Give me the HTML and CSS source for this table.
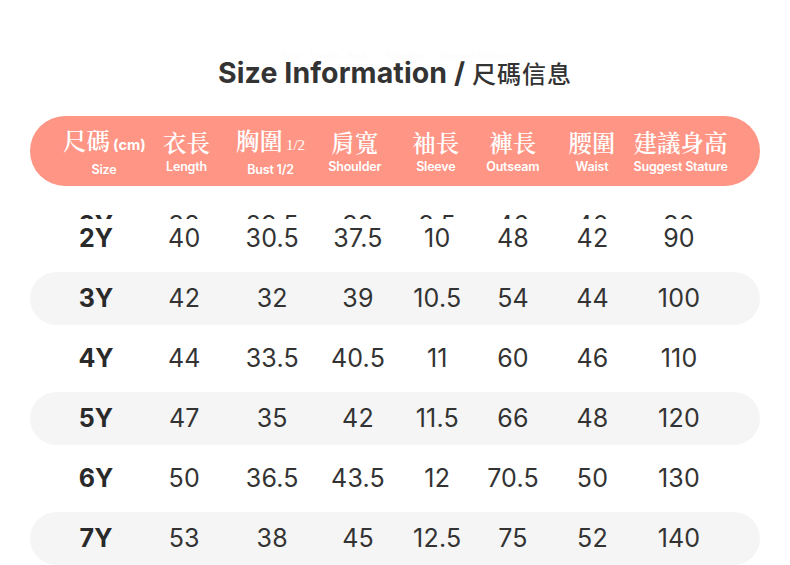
FILE: index.html
```html
<!DOCTYPE html>
<html lang="zh-Hant">
<head>
<meta charset="utf-8">
<title>Size Information</title>
<link rel="stylesheet" href="styles.css">
</head>
<body>
<div class="page">
  <div class="ghost">Size&nbsp;&nbsp;&nbsp;&nbsp;Length&nbsp;&nbsp;&nbsp;Bust&nbsp;&nbsp;&nbsp;&nbsp;&nbsp;&nbsp;&nbsp;&nbsp;Shoulder&nbsp;&nbsp;&nbsp;&nbsp;&nbsp;&nbsp;Suggest Stature</div>
  <h1 class="title">Size Information / <span class="cjk">尺碼信息</span></h1>

  <div class="head">
    <div class="hcell"><div class="zh">尺碼<span class="unit">(cm)</span></div><div class="en">Size</div></div>
    <div class="hcell"><div class="zh">衣長</div><div class="en">Length</div></div>
    <div class="hcell"><div class="zh">胸圍<span class="half">1/2</span></div><div class="en">Bust 1/2</div></div>
    <div class="hcell"><div class="zh">肩寬</div><div class="en">Shoulder</div></div>
    <div class="hcell"><div class="zh">袖長</div><div class="en">Sleeve</div></div>
    <div class="hcell"><div class="zh">褲長</div><div class="en">Outseam</div></div>
    <div class="hcell"><div class="zh">腰圍</div><div class="en">Waist</div></div>
    <div class="hcell"><div class="zh">建議身高</div><div class="en">Suggest Stature</div></div>
  </div>

  <div class="rows">
    <div class="row first">
      <div class="strip">
        <div class="cells"><span class="sz">2Y</span><span>38</span><span>29.5</span><span>33</span><span>9.5</span><span>46</span><span>40</span><span>90</span></div>
      </div>
      <span class="sz">2Y</span><span>40</span><span>30.5</span><span>37.5</span><span>10</span><span>48</span><span>42</span><span>90</span>
    </div>
    <div class="row alt"><span class="sz">3Y</span><span>42</span><span>32</span><span>39</span><span>10.5</span><span>54</span><span>44</span><span>100</span></div>
    <div class="row"><span class="sz">4Y</span><span>44</span><span>33.5</span><span>40.5</span><span>11</span><span>60</span><span>46</span><span>110</span></div>
    <div class="row alt"><span class="sz">5Y</span><span>47</span><span>35</span><span>42</span><span>11.5</span><span>66</span><span>48</span><span>120</span></div>
    <div class="row"><span class="sz">6Y</span><span>50</span><span>36.5</span><span>43.5</span><span>12</span><span>70.5</span><span>50</span><span>130</span></div>
    <div class="row alt"><span class="sz">7Y</span><span>53</span><span>38</span><span>45</span><span>12.5</span><span>75</span><span>52</span><span>140</span></div>
  </div>
</div>
</body>
</html>
```

FILE: styles.css
```css
* { box-sizing: border-box; }
html, body { margin: 0; padding: 0; background: #ffffff; }
body {
  font-family: Inter, "Noto Sans", "Noto Sans CJK TC", sans-serif;
  color: #333333;
  width: 790px;
  height: 565px;
  overflow: hidden;
}
.page {
  padding: 0 30px;
  position: relative;
}
.ghost {
  position: absolute;
  top: 50px;
  left: 0;
  width: 100%;
  text-align: center;
  font-size: 9px;
  color: #fcfcfc;
}
.title {
  margin: 0;
  padding-top: 55px;
  height: 116px;
  text-align: center;
  font-size: 28.5px;
  font-weight: 700;
  letter-spacing: 0.1px;
  color: #333333;
  line-height: 36px;
}
.title .cjk {
  font-family: "Noto Sans CJK TC", sans-serif;
  font-weight: 500;
  font-size: 24px;
  letter-spacing: 1px;
}
.head {
  height: 70px;
  border-radius: 35px;
  background: #fe9585;
  color: #ffffff;
  display: grid;
  grid-template-columns: 82px 83px 85px 83.5px 78.5px 75.5px 83px 91px;
  padding-left: 33px;
  align-items: center;
}
.hcell {
  text-align: center;
  white-space: nowrap;
}
.zh {
  font-family: "Noto Serif CJK TC", "Noto Serif CJK SC", "Noto Sans CJK TC", serif;
  font-size: 23.5px;
  line-height: 28px;
  font-weight: 600;
}
.unit {
  font-family: Inter, sans-serif;
  font-size: 14.5px;
  font-weight: 700;
  margin-left: 3px;
}
.half {
  font-family: "Liberation Serif", serif;
  font-size: 15px;
  font-weight: 400;
  margin-left: 3px;
}
.en {
  font-size: 12.5px;
  font-weight: 600;
  line-height: 14px;
  margin-top: 4px;
  letter-spacing: -0.2px;
}
.rows {
  display: flex;
  flex-direction: column;
  gap: 7px;
  margin-top: 25.5px;
}
.row, .cells {
  display: grid;
  grid-template-columns: 89px 87.5px 88.5px 83px 75.5px 76px 83px 90px;
  padding-left: 21.5px;
  align-items: center;
  font-size: 25px;
  color: #333333;
}
.row {
  height: 53px;
  border-radius: 26.5px;
  position: relative;
}
.row span, .cells span {
  text-align: center;
  letter-spacing: 0.2px;
}
.row.alt { background: #f5f5f5; }
.sz { font-weight: 700; color: #2a2a2a; letter-spacing: 0 !important; }
.strip {
  position: absolute;
  left: 0;
  right: 0;
  top: 1px;
  height: 6px;
  overflow: hidden;
  background: #ffffff;
}
.strip .cells {
  height: 30px;
  margin-top: -3px;
}
```
